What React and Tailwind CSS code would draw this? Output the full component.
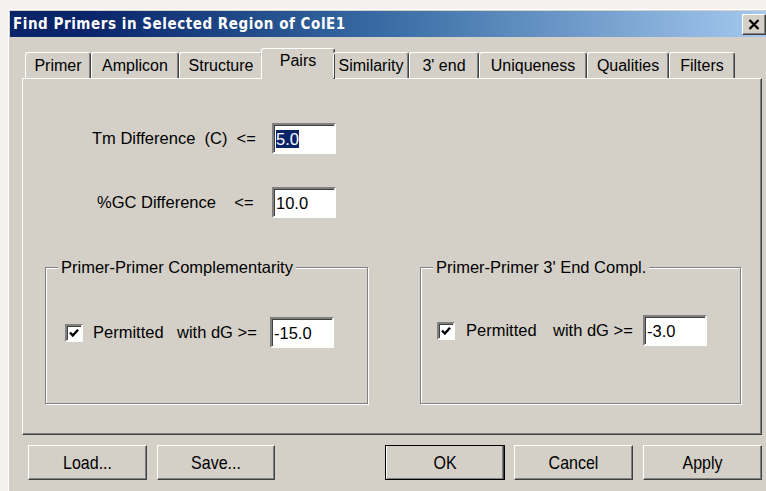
import { useState } from "react";

const TABS = [
    { label: "Primer", w: "w-[66px]" },
    { label: "Amplicon", w: "w-[88px]" },
    { label: "Structure", w: "w-[84px]" },
    { label: "Pairs", w: "w-[74px]" },
    { label: "Similarity", w: "w-[76px]" },
    { label: "3' end", w: "w-[70px]" },
    { label: "Uniqueness", w: "w-[108px]" },
    { label: "Qualities", w: "w-[82px]" },
    { label: "Filters", w: "w-[66px]" },
];

const raised =
    "border border-t-white border-l-white border-r-[#404040] border-b-[#404040] shadow-[inset_-1px_-1px_0_#808080]";

const NumberField = ({ value, selected, className = "" }) => (
    <div
        className={`flex items-center w-[64px] h-[31px] bg-white border-2 border-t-[#808080] border-l-[#808080] border-r-white border-b-white shadow-[inset_1px_1px_0_#404040] pl-[2px] ${className}`}
    >
        <span className={selected ? "bg-[#0a246a] text-white leading-[18px]" : "leading-[18px]"}>{value}</span>
    </div>
);

const CheckBox = ({ checked, onChange }) => (
    <button
        type="button"
        onClick={() => onChange(!checked)}
        className="w-[18px] h-[18px] bg-white border-2 border-t-[#808080] border-l-[#808080] border-r-white border-b-white shadow-[inset_1px_1px_0_#404040] flex items-center justify-center"
    >
        {checked && (
            <svg width="12" height="12" viewBox="0 0 12 12">
                <path d="M2 5.5 L4.8 8.5 L10 2.8" fill="none" stroke="#000" strokeWidth="2.4" />
            </svg>
        )}
    </button>
);

const GroupBox = ({ title, className, children }) => (
    <div
        className={`relative h-[137px] border border-[#808080] shadow-[inset_1px_1px_0_#fff,1px_1px_0_#fff] ${className}`}
    >
        <span className="absolute -top-[11px] left-[12px] px-[3px] bg-[#d4d0c8] leading-[20px]">{title}</span>
        {children}
    </div>
);

const DialogButton = ({ children, className = "", isDefault }) => (
    <button
        type="button"
        className={`h-[35px] flex items-center justify-center bg-[#d4d0c8] ${
            isDefault ? "outline outline-1 outline-black -outline-offset-1" : ""
        } ${className}`}
    >
        <span className={`w-full h-full flex items-center justify-center ${raised} ${isDefault ? "m-[1px]" : ""}`}>
            <span className="inline-block scale-y-[1.2] text-[16px]">{children}</span>
        </span>
    </button>
);

export default function App() {
    const [activeTab, setActiveTab] = useState("Pairs");
    const [complOk, setComplOk] = useState(true);
    const [endOk, setEndOk] = useState(true);

    return (
        <div className="w-[766px] h-[491px] overflow-hidden bg-[#f3f2ef] pt-[9px] pl-[8px] font-['Liberation_Sans',Arial,sans-serif] text-[16.5px] text-black">
            <div className="w-[780px] h-[500px] bg-[#d4d0c8] border-l border-t border-white flex flex-col pl-[1px] pt-[1px]">
                {/* title bar */}
                <div className="w-[760px] h-[26px] flex items-center bg-linear-to-r from-[#0a246a] from-10% via-[#3a6ea5] via-50% to-[#a6caf0] pl-[3px]">
                    <span className="flex-1 text-white font-bold text-[15px] font-['DejaVu_Sans_Condensed','DejaVu_Sans',sans-serif] tracking-[0.55px]">
                        Find Primers in Selected Region of ColE1
                    </span>
                    <span className={`w-[24px] h-[21px] mr-[4px] bg-[#d4d0c8] flex items-center justify-center ${raised}`}>
                        <svg width="12" height="11" viewBox="0 0 12 11">
                            <path d="M1.5 1 L10.5 10 M10.5 1 L1.5 10" stroke="#000" strokeWidth="2.2" />
                        </svg>
                    </span>
                </div>

                <div className="flex flex-col pl-[12px] mt-[11px]">
                    {/* tab strip */}
                    <div className="flex items-end h-[30px] pl-[3px] relative z-10">
                        {TABS.map((t) => {
                            const on = t.label === activeTab;
                            return (
                                <button
                                    key={t.label}
                                    type="button"
                                    onClick={() => setActiveTab(t.label)}
                                    className={`${t.w} ${
                                        on ? "h-[31px] -mx-[2px] -mb-[1px] pb-[6px] px-[2px] bg-[#d4d0c8]" : "h-[26px] pt-[1px]"
                                    } flex items-center justify-center text-[16px] border-l border-t border-white border-r border-r-[#404040] shadow-[inset_-1px_0_0_#808080] rounded-t-[3px]`}
                                >
                                    {t.label}
                                </button>
                            );
                        })}
                    </div>

                    {/* page */}
                    <div className="w-[740px] h-[357px] border border-t-white border-l-white border-r-[#404040] border-b-[#404040] shadow-[inset_-1px_-1px_0_#808080] flex flex-col">
                        <div className="flex items-center mt-[44px]">
                            <span className="ml-[69px] w-[180px] whitespace-pre">Tm Difference  (C)  &lt;=</span>
                            <NumberField value="5.0" selected />
                        </div>
                        <div className="flex items-center mt-[33px]">
                            <span className="ml-[74px] w-[175px] whitespace-pre">%GC Difference    &lt;=</span>
                            <NumberField value="10.0" />
                        </div>

                        <div className="flex mt-[49px] ml-[22px]">
                            <GroupBox title="Primer-Primer Complementarity" className="w-[323px]">
                                <div className="flex items-center mt-[49px]">
                                    <span className="ml-[19px]">
                                        <CheckBox checked={complOk} onChange={setComplOk} />
                                    </span>
                                    <span className="ml-[10px] w-[84px]">Permitted</span>
                                    <span className="w-[93px] whitespace-pre">with dG &gt;=</span>
                                    <NumberField value="-15.0" />
                                </div>
                            </GroupBox>
                            <GroupBox title="Primer-Primer 3' End Compl." className="w-[321px] ml-[52px]">
                                <div className="flex items-center mt-[47px]">
                                    <span className="ml-[16px]">
                                        <CheckBox checked={endOk} onChange={setEndOk} />
                                    </span>
                                    <span className="ml-[11px] w-[87px]">Permitted</span>
                                    <span className="w-[90px] whitespace-pre">with dG &gt;=</span>
                                    <NumberField value="-3.0" />
                                </div>
                            </GroupBox>
                        </div>
                    </div>

                    {/* buttons */}
                    <div className="flex mt-[10px]">
                        <DialogButton className="ml-[6px] w-[119px]">Load...</DialogButton>
                        <DialogButton className="ml-[10px] w-[118px]">Save...</DialogButton>
                        <DialogButton className="ml-[110px] w-[120px]" isDefault>
                            OK
                        </DialogButton>
                        <DialogButton className="ml-[9px] w-[119px]">Cancel</DialogButton>
                        <DialogButton className="ml-[10px] w-[119px]">Apply</DialogButton>
                    </div>
                </div>
            </div>
        </div>
    );
}
